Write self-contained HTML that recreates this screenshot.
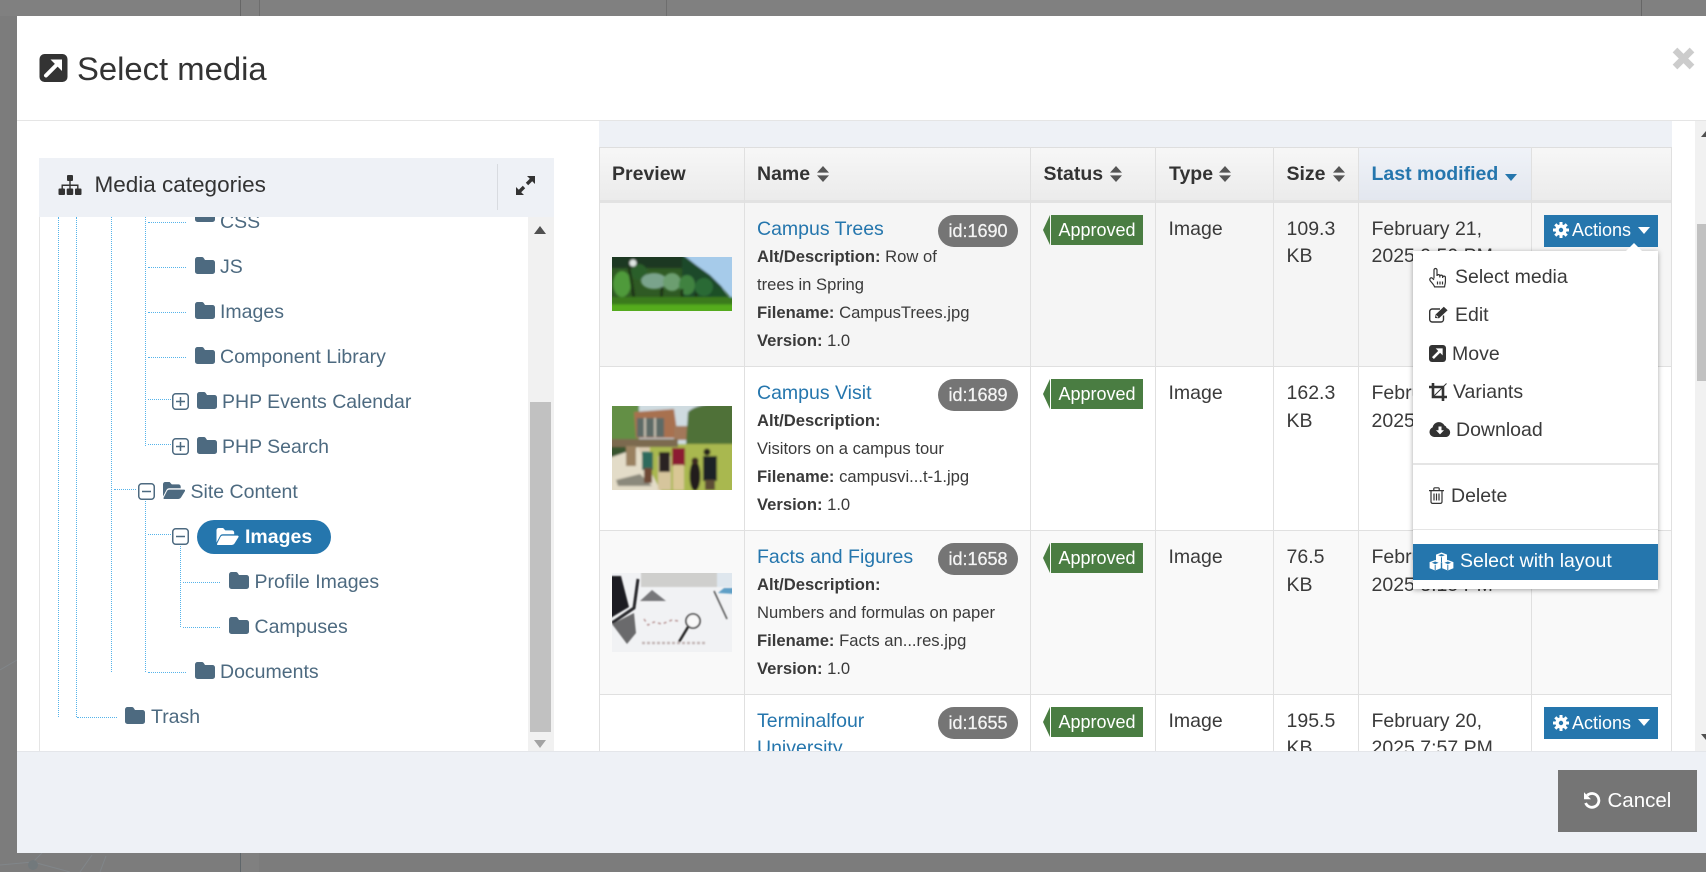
<!DOCTYPE html>
<html lang="en">
<head>
<meta charset="utf-8">
<title>Select media</title>
<style>
html,body{margin:0;padding:0;width:1706px;height:872px;overflow:hidden;background:#7c7c7c;font-family:"Liberation Sans",sans-serif;color:#3a3a3a}
.a{position:absolute}
.t{position:absolute;white-space:nowrap;line-height:28px;margin-top:-14px;font-size:19.5px}
.d{margin-top:-13px}
.s{font-size:16.6px}
b{font-weight:700}
.tree{color:#4d6a80}
.lnk{color:#2576ad}
.v{position:absolute;width:0;border-left:1px dotted #55b3ea}
.h{position:absolute;height:0;border-top:1px dotted #55b3ea}
.pill{position:absolute;left:938px;width:80px;height:32px;border-radius:16px;background:#757575;color:#f4f4f4;font-size:18px;-webkit-text-stroke:.25px #f4f4f4;line-height:32px;text-align:center}
.appr{position:absolute;left:1051px;width:92px;height:30px;background:#4a7d42;color:#fff;font-size:18px;line-height:30px;text-align:center}
.arr{position:absolute;left:1043px;width:0;height:0;border-style:solid;border-width:15px 7px 15px 0;border-color:transparent #4a7d42 transparent transparent}
.btn{position:absolute;left:1544px;width:114px;height:32px;background:#2576ad}
.col{position:absolute;width:1px;background:#e0e0e0}
svg{position:absolute;display:block}
</style>
</head>
<body>
<!-- page behind -->
<div class="a" style="left:0;top:0;width:1706px;height:16px;background:#808080"></div>
<div class="a" style="left:240px;top:0;width:1px;height:16px;background:#666"></div>
<div class="a" style="left:259px;top:0;width:1px;height:16px;background:#6e6e6e"></div>
<div class="a" style="left:666px;top:0;width:1px;height:16px;background:#6e6e6e"></div>
<div class="a" style="left:1641px;top:0;width:1px;height:16px;background:#666"></div>
<div class="a" style="left:240px;top:853px;width:1px;height:19px;background:#5f666a"></div>
<div class="a" style="left:241px;top:853px;width:18px;height:19px;background:#808080"></div>
<svg style="left:0;top:640px" width="240" height="232" viewBox="0 0 240 232" fill="none" stroke="#81868a" stroke-width="1"><path d="M0 30L17 20M0 225L33 222L70 232M33 222L42 213M80 232L92 215M100 232L106 216"/><circle cx="33" cy="225" r="5" fill="#72797c" stroke="none"/></svg>
<!-- modal -->
<div class="a" style="left:17px;top:16px;width:1689px;height:837px;background:#fff"></div>
<div class="a" style="left:17px;top:120px;width:1689px;height:1px;background:#e5e5e5"></div>

<svg style="left:39px;top:54px" width="29" height="28" viewBox="0 0 28 28"><rect width="28" height="28" rx="5" fill="#333"/><path d="M6.5 21.5L18 10" stroke="#fff" stroke-width="4" stroke-linecap="round"/><path d="M11 5.5H22.5V17z" fill="#fff"/></svg>
<span class="t" style="left:77px;top:69px;font-size:32.8px;line-height:40px;margin-top:-20px;color:#333">Select media</span>
<svg style="left:1672px;top:47px" width="23" height="23" viewBox="0 0 23 23"><path d="M3 3L20 20M20 3L3 20" stroke="#ccc" stroke-width="6.6"/></svg>

<!-- page scrollbar -->
<div class="a" style="left:1695px;top:121px;width:11px;height:630px;background:#f1f1f1"></div>
<div class="a" style="left:1697px;top:224px;width:9px;height:157px;background:#c1c1c1"></div>
<svg style="left:1701px;top:131px" width="5" height="6"><path d="M0 6L5 0V6z" fill="#505050"/></svg>
<svg style="left:1701px;top:734px" width="5" height="6"><path d="M0 0H5V6z" fill="#505050"/></svg>

<!-- tree panel -->
<div class="a" style="left:39px;top:217px;width:1px;height:534px;background:#e5e5e5"></div>
<div class="a" style="left:40px;top:217px;width:488px;height:534px;background:#fff;overflow:hidden"></div>
<div class="a" style="left:528px;top:217px;width:26px;height:534px;background:#f1f1f1"></div>
<div class="a" style="left:530px;top:402px;width:21px;height:330px;background:#c1c1c1"></div>
<svg style="left:534px;top:226px" width="12" height="8"><path d="M0 8L6 0L12 8z" fill="#505050"/></svg>
<svg style="left:534px;top:740px" width="12" height="8"><path d="M0 0L6 8L12 0z" fill="#a3a3a3"/></svg>

<!-- dotted lines -->
<div class="v" style="left:58px;top:217px;height:500px"></div>
<div class="v" style="left:76px;top:217px;height:500px"></div>
<div class="h" style="left:77px;top:717px;width:40px"></div>
<div class="v" style="left:111px;top:217px;height:455px"></div>
<div class="h" style="left:114px;top:489px;width:22px"></div>
<div class="v" style="left:145px;top:217px;height:229px"></div>
<div class="h" style="left:148px;top:222px;width:38px"></div>
<div class="h" style="left:148px;top:267px;width:38px"></div>
<div class="h" style="left:148px;top:312px;width:38px"></div>
<div class="h" style="left:148px;top:357px;width:38px"></div>
<div class="h" style="left:148px;top:399px;width:23px"></div>
<div class="h" style="left:148px;top:444px;width:23px"></div>
<div class="v" style="left:145px;top:499px;height:173px"></div>
<div class="h" style="left:148px;top:534px;width:23px"></div>
<div class="h" style="left:148px;top:672px;width:38px"></div>
<div class="v" style="left:180px;top:544px;height:83px"></div>
<div class="h" style="left:183px;top:582px;width:37px"></div>
<div class="h" style="left:183px;top:627px;width:37px"></div>

<!-- tree rows -->
<svg width="0" height="0" style="position:absolute"><defs>
<path id="fld" d="M2.5 0H7a2 2 0 0 1 1.7 1L10 3H17.5A2.5 2.5 0 0 1 20 5.5V14.5A2.5 2.5 0 0 1 17.5 17H2.5A2.5 2.5 0 0 1 0 14.5V2.5A2.5 2.5 0 0 1 2.5 0z"/>
<path id="fop" d="M0 14.5V2.2A2.2 2.2 0 0 1 2.2 0H6.6L8.8 2.4H15.5A2.2 2.2 0 0 1 17.7 4.6V6.3H6.2A3 3 0 0 0 3.6 7.8zM6 7.6H21A1 1 0 0 1 22 9L18 15.5A3.2 3.2 0 0 1 15.4 17H1.2A.8.8 0 0 1 .6 15.8L4 9A2.4 2.4 0 0 1 6 7.6z"/>
</defs></svg>

<svg style="left:195px;top:205px" width="20" height="17" viewBox="0 0 20 17" fill="#4d6a80"><use href="#fld"/></svg>
<svg style="left:195px;top:257px" width="20" height="17" viewBox="0 0 20 17" fill="#4d6a80"><use href="#fld"/></svg>
<svg style="left:195px;top:302px" width="20" height="17" viewBox="0 0 20 17" fill="#4d6a80"><use href="#fld"/></svg>
<svg style="left:195px;top:347px" width="20" height="17" viewBox="0 0 20 17" fill="#4d6a80"><use href="#fld"/></svg>
<svg style="left:197px;top:392px" width="20" height="17" viewBox="0 0 20 17" fill="#4d6a80"><use href="#fld"/></svg>
<svg style="left:197px;top:437px" width="20" height="17" viewBox="0 0 20 17" fill="#4d6a80"><use href="#fld"/></svg>
<svg style="left:163px;top:482px" width="22" height="17" viewBox="0 0 22 17" fill="#4d6a80"><use href="#fop"/></svg>
<svg style="left:229px;top:572px" width="20" height="17" viewBox="0 0 20 17" fill="#4d6a80"><use href="#fld"/></svg>
<svg style="left:229px;top:617px" width="20" height="17" viewBox="0 0 20 17" fill="#4d6a80"><use href="#fld"/></svg>
<svg style="left:195px;top:662px" width="20" height="17" viewBox="0 0 20 17" fill="#4d6a80"><use href="#fld"/></svg>
<svg style="left:125px;top:707px" width="20" height="17" viewBox="0 0 20 17" fill="#4d6a80"><use href="#fld"/></svg>

<!-- +/- boxes -->
<svg style="left:172px;top:393px" width="17" height="17" viewBox="0 0 17 17" fill="none" stroke="#4d6a80" stroke-width="1.5"><rect x=".75" y=".75" width="15.5" height="15.5" rx="3" fill="#fff"/><path d="M4 8.5H13M8.5 4V13"/></svg>
<svg style="left:172px;top:438px" width="17" height="17" viewBox="0 0 17 17" fill="none" stroke="#4d6a80" stroke-width="1.5"><rect x=".75" y=".75" width="15.5" height="15.5" rx="3" fill="#fff"/><path d="M4 8.5H13M8.5 4V13"/></svg>
<svg style="left:138px;top:483px" width="17" height="17" viewBox="0 0 17 17" fill="none" stroke="#4d6a80" stroke-width="1.5"><rect x=".75" y=".75" width="15.5" height="15.5" rx="3" fill="#fff"/><path d="M4 8.5H13"/></svg>
<svg style="left:172px;top:528px" width="17" height="17" viewBox="0 0 17 17" fill="none" stroke="#4d6a80" stroke-width="1.5"><rect x=".75" y=".75" width="15.5" height="15.5" rx="3" fill="#fff"/><path d="M4 8.5H13"/></svg>

<span class="t tree" style="left:220px;top:222px">CSS</span>
<span class="t tree" style="left:220px;top:267px">JS</span>
<span class="t tree" style="left:220px;top:312px">Images</span>
<span class="t tree" style="left:220px;top:357px">Component Library</span>
<span class="t tree" style="left:222px;top:402px">PHP Events Calendar</span>
<span class="t tree" style="left:222px;top:447px">PHP Search</span>
<span class="t tree" style="left:190.5px;top:492px">Site Content</span>
<div class="a" style="left:197px;top:520px;width:134px;height:34px;border-radius:17px;background:#2576ad"></div>
<svg style="left:216px;top:528px" width="23" height="17" viewBox="0 0 22 17" fill="#fff"><use href="#fop"/></svg>
<span class="t" style="left:245px;top:537px;font-weight:700;color:#fff">Images</span>
<span class="t tree" style="left:254.5px;top:582px">Profile Images</span>
<span class="t tree" style="left:254.5px;top:627px">Campuses</span>
<span class="t tree" style="left:220px;top:672px">Documents</span>
<span class="t tree" style="left:151px;top:717px">Trash</span>

<!-- tree header -->
<div class="a" style="left:39px;top:158px;width:515px;height:59px;background:#eef1f6"></div>
<svg style="left:58px;top:175px" width="24" height="20" viewBox="0 0 23 20" fill="#333"><rect x="8.5" y="0" width="6" height="6" rx="1"/><path d="M10.8 5h1.4v4.5H20V14h-1.4V11H12.2V14H10.8V11H4.4V14H3V9.5H10.8z"/><rect x="0" y="13.5" width="6.5" height="6.5" rx="1"/><rect x="8.2" y="13.5" width="6.5" height="6.5" rx="1"/><rect x="16.5" y="13.5" width="6.5" height="6.5" rx="1"/></svg>
<span class="t" style="left:94.5px;top:185px;font-size:22.5px;color:#333">Media categories</span>
<div class="a" style="left:497px;top:164px;width:1px;height:46px;background:#d8dbe0"></div>
<svg style="left:516px;top:176px" width="19" height="19" viewBox="0 0 19 19" fill="#333"><path d="M11 0H19V8L16.2 5.2L12.2 9.2L9.8 6.8L13.8 2.8zM8 19H0V11L2.8 13.8L6.8 9.8L9.2 12.2L5.2 16.2z"/></svg>

<!-- table area -->
<div class="a" style="left:599px;top:121px;width:1073px;height:26px;background:#eef1f6"></div>
<div class="a" style="left:599px;top:147px;width:1073px;height:604px;overflow:hidden;background:#fff">
  <div class="a" style="left:0;top:0;width:1073px;height:53px;background:linear-gradient(#f7f7f7,#ebebeb)"></div>
  <div class="a" style="left:760px;top:0;width:172px;height:53px;background:linear-gradient(#f0f3f8,#e3e7ef)"></div>
  <div class="a" style="left:0;top:0;width:1073px;height:1px;background:#dedede"></div>
  <div class="a" style="left:0;top:53px;width:1073px;height:3px;background:#e2e2e2"></div>
  <div class="a" style="left:0;top:56px;width:1073px;height:163px;background:#f5f5f5"></div>
  <div class="a" style="left:0;top:219px;width:1073px;height:1px;background:#e0e0e0"></div>
  <div class="a" style="left:0;top:383px;width:1073px;height:1px;background:#e0e0e0"></div>
  <div class="a" style="left:0;top:384px;width:1073px;height:163px;background:#f9f9f9"></div>
  <div class="a" style="left:0;top:547px;width:1073px;height:1px;background:#e0e0e0"></div>
  <div class="col" style="left:0;top:0;height:604px"></div>
  <div class="col" style="left:145px;top:0;height:604px"></div>
  <div class="col" style="left:431px;top:0;height:604px"></div>
  <div class="col" style="left:556px;top:0;height:604px"></div>
  <div class="col" style="left:674px;top:0;height:604px"></div>
  <div class="col" style="left:759px;top:0;height:604px"></div>
  <div class="col" style="left:932px;top:0;height:604px"></div>
  <div class="col" style="left:1072px;top:0;height:604px"></div>
</div>

<!-- header labels -->
<span class="t d" style="left:612px;top:173px;font-weight:700;color:#333">Preview</span>
<span class="t d" style="left:757px;top:173px;font-weight:700;color:#333">Name</span>
<svg style="left:817px;top:166px" width="12" height="16" viewBox="0 0 12 16" fill="#555"><path d="M0 6.6L6 0L12 6.6zM0 9.4L6 16L12 9.4z"/></svg>
<span class="t d" style="left:1043.5px;top:173px;font-weight:700;color:#333">Status</span>
<svg style="left:1110px;top:166px" width="12" height="16" viewBox="0 0 12 16" fill="#555"><path d="M0 6.6L6 0L12 6.6zM0 9.4L6 16L12 9.4z"/></svg>
<span class="t d" style="left:1169px;top:173px;font-weight:700;color:#333">Type</span>
<svg style="left:1219px;top:166px" width="12" height="16" viewBox="0 0 12 16" fill="#555"><path d="M0 6.6L6 0L12 6.6zM0 9.4L6 16L12 9.4z"/></svg>
<span class="t d" style="left:1286.5px;top:173px;font-weight:700;color:#333">Size</span>
<svg style="left:1333px;top:166px" width="12" height="16" viewBox="0 0 12 16" fill="#555"><path d="M0 6.6L6 0L12 6.6zM0 9.4L6 16L12 9.4z"/></svg>
<span class="t d lnk" style="left:1371.5px;top:173px;font-weight:700">Last modified</span>
<svg style="left:1505px;top:174px" width="12" height="7" viewBox="0 0 12 7" fill="#2576ad"><path d="M0 0H12L6 7z"/></svg>

<!-- thumbnails -->
<svg style="left:612px;top:257px" width="120" height="54" viewBox="0 0 120 54">
<defs><filter id="b1" x="-5%" y="-5%" width="110%" height="110%"><feGaussianBlur stdDeviation="1.1"/></filter><clipPath id="c1"><rect width="120" height="54"/></clipPath></defs>
<g clip-path="url(#c1)"><rect width="120" height="54" fill="#2f5a24"/>
<g filter="url(#b1)">
<path d="M68 -3H123V42L118 40L108 28L96 18L82 8z" fill="#a6cbea"/>
<rect x="-3" y="-3" width="74" height="14" fill="#1d3722"/>
<path d="M70 -3L84 8L98 18L110 30L116 42H70z" fill="#1f4a2c"/>
<ellipse cx="10" cy="27" rx="9" ry="13" fill="#4f9a3a"/>
<ellipse cx="27" cy="15" rx="8" ry="8" fill="#2c5f2a"/>
<ellipse cx="42" cy="24" rx="13" ry="8" fill="#7aa38c"/>
<ellipse cx="60" cy="25" rx="9" ry="9" fill="#6c9e70"/>
<ellipse cx="75" cy="28" rx="8" ry="10" fill="#3f8240"/>
<ellipse cx="92" cy="30" rx="9" ry="9" fill="#2c6a36"/>
<ellipse cx="106" cy="37" rx="7" ry="6" fill="#1f5028"/>
<path d="M17 10L23 48M50 30L49 46M70 32L70 46M84 36L84 46" stroke="#1f3318" stroke-width="2.6"/>
<rect x="-3" y="40" width="126" height="8" fill="#3a7a1e"/>
<rect x="-3" y="47.5" width="126" height="8" fill="#55ac1c"/>
<circle cx="21" cy="6" r="3.5" fill="#dfe6e2"/>
</g></g></svg>

<svg style="left:612px;top:406px" width="120" height="84" viewBox="0 0 120 84">
<defs><filter id="b2" x="-5%" y="-5%" width="110%" height="110%"><feGaussianBlur stdDeviation="1.1"/></filter><clipPath id="c2"><rect width="120" height="84"/></clipPath></defs>
<g clip-path="url(#c2)"><rect width="120" height="84" fill="#d8c9b0"/>
<g filter="url(#b2)">
<rect x="-3" y="-3" width="126" height="42" fill="#cfdbe0"/>
<rect x="-3" y="-3" width="30" height="36" fill="#648f44"/>
<path d="M22 6L62 3L66 32H24z" fill="#a8714f"/>
<rect x="25" y="12" width="27" height="19" fill="#5d6b66"/>
<path d="M33 12V31M43 12V31" stroke="#c9c2b2" stroke-width="2"/>
<path d="M62 20H76V34H62z" fill="#a2785a"/>
<path d="M76 6Q86 -4 123 -3V38H74z" fill="#4f7139"/>
<path d="M38 38H123V87H38z" fill="#a9b84f"/>
<path d="M-3 33H66V41H-3z" fill="#7c6a50"/>
<path d="M-3 41H14V56H-3z" fill="#37552e"/>
<path d="M-3 52L26 42L50 87H-3z" fill="#e3dcc8"/>
<path d="M4 74L28 68L40 80H6z" fill="#8b897c"/>
<rect x="14" y="40" width="10" height="20" fill="#9a8160"/>
<rect x="30" y="46" width="11" height="18" fill="#2e6a5c"/>
<rect x="32" y="62" width="8" height="15" fill="#6e4a36"/>
<rect x="46" y="50" width="13" height="34" fill="#d6c59c"/>
<rect x="47" y="46" width="11" height="20" fill="#2a2420"/>
<rect x="60" y="42" width="13" height="18" fill="#8c1f33"/>
<rect x="61" y="59" width="11" height="25" fill="#d9c795"/>
<ellipse cx="83" cy="70" rx="5.5" ry="15" fill="#201a1a"/>
<circle cx="83" cy="55" r="3.5" fill="#3d2a22"/>
<rect x="91" y="50" width="14" height="25" fill="#1c2026"/>
<rect x="93" y="74" width="10" height="10" fill="#5d4e36"/>
<circle cx="95" cy="46" r="3.5" fill="#25201c"/>
</g></g></svg>

<svg style="left:612px;top:573px" width="120" height="79" viewBox="0 0 120 79">
<defs><filter id="b3" x="-5%" y="-5%" width="110%" height="110%"><feGaussianBlur stdDeviation=".9"/></filter><clipPath id="c3"><rect width="120" height="79"/></clipPath></defs>
<g clip-path="url(#c3)"><rect width="120" height="79" fill="#f1f2f4"/>
<g filter="url(#b3)">
<rect x="29" y="-3" width="76" height="17" fill="#cfcfcd"/>
<rect x="105" y="-3" width="18" height="17" fill="#dfe7ee"/>
<path d="M-3 3H9L17 34L-3 46z" fill="#1e1e20"/>
<path d="M0 50L22 35L26 6" stroke="#26262a" stroke-width="3" fill="none"/>
<path d="M40 17L54 28H28z" fill="#77777a"/>
<path d="M0 51L22 40L24 60L15 71z" fill="#6a6a6c"/>
<path d="M112 15H123V21L106 20z" fill="#5e9fc6"/>
<path d="M102 18L115 46" stroke="#555" stroke-width="1.5" fill="none"/>
<circle cx="81" cy="48" r="7" fill="#f8f8f8" stroke="#333" stroke-width="1.6"/>
<path d="M76 54L67 69" stroke="#1d1d1d" stroke-width="2.4"/>
<path d="M30 70H95" stroke="#c4b8b8" stroke-width="2.5" stroke-dasharray="3 2"/>
<path d="M32 46l4 6 6-3 8 2 10-4 6 1" stroke="#b99" stroke-width="1.5" fill="none" stroke-dasharray="3 3"/>
</g></g></svg>

<!-- row 1 -->
<span class="t d lnk" style="left:757px;top:228px">Campus Trees</span>
<div class="pill" style="top:215px">id:1690</div>
<span class="t s" style="left:757px;top:257px"><b>Alt/Description:</b> Row of</span>
<span class="t s" style="left:757px;top:285px">trees in Spring</span>
<span class="t s" style="left:757px;top:313px"><b>Filename:</b> CampusTrees.jpg</span>
<span class="t s" style="left:757px;top:341px"><b>Version:</b> 1.0</span>
<div class="arr" style="top:215px"></div><div class="appr" style="top:215px">Approved</div>
<span class="t d" style="left:1168.5px;top:228px">Image</span>
<span class="t d" style="left:1286.5px;top:228px">109.3</span>
<span class="t d" style="left:1286.5px;top:255px">KB</span>
<span class="t d" style="left:1371.5px;top:228px">February 21,</span>
<span class="t d" style="left:1371.5px;top:255px">2025 9:50 PM</span>

<!-- row 2 -->
<span class="t d lnk" style="left:757px;top:392px">Campus Visit</span>
<div class="pill" style="top:379px">id:1689</div>
<span class="t s" style="left:757px;top:421px"><b>Alt/Description:</b></span>
<span class="t s" style="left:757px;top:449px">Visitors on a campus tour</span>
<span class="t s" style="left:757px;top:477px"><b>Filename:</b> campusvi...t-1.jpg</span>
<span class="t s" style="left:757px;top:505px"><b>Version:</b> 1.0</span>
<div class="arr" style="top:379px"></div><div class="appr" style="top:379px">Approved</div>
<span class="t d" style="left:1168.5px;top:392px">Image</span>
<span class="t d" style="left:1286.5px;top:392px">162.3</span>
<span class="t d" style="left:1286.5px;top:420px">KB</span>
<span class="t d" style="left:1371.5px;top:392px">February 21,</span>
<span class="t d" style="left:1371.5px;top:420px">2025 8:10 PM</span>

<!-- row 3 -->
<span class="t d lnk" style="left:757px;top:556px">Facts and Figures</span>
<div class="pill" style="top:543px">id:1658</div>
<span class="t s" style="left:757px;top:585px"><b>Alt/Description:</b></span>
<span class="t s" style="left:757px;top:613px">Numbers and formulas on paper</span>
<span class="t s" style="left:757px;top:641px"><b>Filename:</b> Facts an...res.jpg</span>
<span class="t s" style="left:757px;top:669px"><b>Version:</b> 1.0</span>
<div class="arr" style="top:543px"></div><div class="appr" style="top:543px">Approved</div>
<span class="t d" style="left:1168.5px;top:556px">Image</span>
<span class="t d" style="left:1286.5px;top:556px">76.5</span>
<span class="t d" style="left:1286.5px;top:584px">KB</span>
<span class="t d" style="left:1371.5px;top:556px">February 21,</span>
<span class="t d" style="left:1371.5px;top:584px">2025 3:15 PM</span>

<!-- row 4 -->
<span class="t d lnk" style="left:757px;top:720px">Terminalfour</span>
<span class="t d lnk" style="left:757px;top:747px">University</span>
<div class="pill" style="top:707px">id:1655</div>
<div class="arr" style="top:707px"></div><div class="appr" style="top:707px">Approved</div>
<span class="t d" style="left:1168.5px;top:720px">Image</span>
<span class="t d" style="left:1286.5px;top:720px">195.5</span>
<span class="t d" style="left:1286.5px;top:747px">KB</span>
<span class="t d" style="left:1371.5px;top:720px">February 20,</span>
<span class="t d" style="left:1371.5px;top:747px">2025 7:57 PM</span>

<!-- Actions buttons -->
<svg width="0" height="0" style="position:absolute"><defs>
<g id="gear"><path d="M8 0V16M0 8H16M2.3 2.3L13.7 13.7M13.7 2.3L2.3 13.7" stroke="#fff" stroke-width="3"/><circle cx="8" cy="8" r="5.6" fill="#fff"/><circle cx="8" cy="8" r="2.2" fill="#2576ad"/></g>
</defs></svg>
<div class="btn" style="top:215px"></div>
<svg style="left:1552.5px;top:222px" width="16" height="16" viewBox="0 0 16 16"><use href="#gear"/></svg>
<span class="t" style="left:1572px;top:230px;font-size:18px;color:#fff">Actions</span>
<svg style="left:1638px;top:227px" width="12" height="7" viewBox="0 0 12 7"><path d="M0 0H12L6 7z" fill="#fff"/></svg>

<div class="btn" style="top:707px"></div>
<svg style="left:1552.5px;top:715px" width="16" height="16" viewBox="0 0 16 16"><use href="#gear"/></svg>
<span class="t" style="left:1572px;top:723px;font-size:18px;color:#fff">Actions</span>
<svg style="left:1638px;top:719px" width="12" height="7" viewBox="0 0 12 7"><path d="M0 0H12L6 7z" fill="#fff"/></svg>

<!-- footer -->
<div class="a" style="left:17px;top:751px;width:1689px;height:102px;background:#eef1f6;border-top:1px solid #e4e6ea;box-sizing:border-box"></div>
<div class="a" style="left:1558px;top:770px;width:139px;height:62px;background:#757575"></div>
<svg style="left:1583px;top:791px" width="18" height="18" viewBox="0 0 18 18" fill="none"><path d="M4.2 4.4A6.9 6.9 0 1 1 2.6 12" stroke="#fff" stroke-width="2.8"/><path d="M1 1.2V8.2H8z" fill="#fff"/></svg>
<span class="t" style="left:1607.5px;top:801px;font-size:20.5px;color:#fff">Cancel</span>

<!-- dropdown -->
<div class="a" style="left:1413px;top:251px;width:245px;height:338px;background:#fff;box-shadow:0 1px 5px rgba(0,0,0,.35)"></div>
<svg style="left:1625px;top:243px" width="18" height="9" viewBox="0 0 18 9"><path d="M0 9L9 0L18 9z" fill="#fff"/></svg>
<svg style="left:1428px;top:267px" width="20" height="21" viewBox="0 0 20 20" fill="none" stroke="#333" stroke-width="1.2" stroke-linejoin="round"><path d="M6 11V2.5a1.5 1.5 0 0 1 3 0V8.5M9 8.5a1.4 1.4 0 0 1 2.8 0V10M11.8 9a1.4 1.4 0 0 1 2.8 0V10.5M14.6 10a1.4 1.4 0 0 1 2.8 0V14.5C17.4 16.5 16.6 17.4 16.6 19.4H6.6C6 17.4 4.5 16 2.2 13.2C1 11.4 2.6 9.6 4.2 10.6L6 12.3M9.5 14V17M12 14V17M14.5 14V17"/></svg>
<span class="t" style="left:1455px;top:277px">Select media</span>
<svg style="left:1429px;top:306px" width="20" height="17" viewBox="0 0 20 17" fill="none" stroke="#333" stroke-width="1.4"><path d="M14.5 9.5V13.5A2.5 2.5 0 0 1 12 16H3.2A2.5 2.5 0 0 1 .7 13.5V5.5A2.5 2.5 0 0 1 3.2 3H11"/><path d="M6 12L6.6 8.5L14.8 .8L18.6 4.2L10 12.2z" fill="#333" stroke="none"/><path d="M7.2 9.6L9 11.4" stroke="#fff" stroke-width="1"/></svg>
<span class="t" style="left:1455px;top:315px">Edit</span>
<svg style="left:1429px;top:345px" width="17" height="17" viewBox="0 0 28 28"><rect width="28" height="28" rx="5" fill="#333"/><path d="M6.5 21.5L18 10" stroke="#fff" stroke-width="4.4"/><path d="M11 5.5H22.5V17z" fill="#fff"/></svg>
<span class="t" style="left:1452px;top:354px">Move</span>
<svg style="left:1429px;top:383px" width="18" height="18" viewBox="0 0 18 18" fill="none" stroke="#333"><path d="M4 0V14H18" stroke-width="2.6"/><path d="M0 4H14V18" stroke-width="2.6"/><path d="M4 14L17.5 .5" stroke-width="1"/></svg>
<span class="t" style="left:1453px;top:392px">Variants</span>
<svg style="left:1429px;top:422px" width="22" height="15" viewBox="0 0 22 15"><path d="M5 15A5 5 0 0 1 3.6 5.4A6.4 6.4 0 0 1 15.6 3.6A3 3 0 0 1 17.6 6A4.6 4.6 0 0 1 17.4 15z" fill="#333"/><path d="M9.5 4.5H12.5V8.2H15L11 12.4L7 8.2H9.5z" fill="#fff"/></svg>
<span class="t" style="left:1456px;top:430px">Download</span>
<div class="a" style="left:1413px;top:463px;width:245px;height:2px;background:#e5e5e5"></div>
<svg style="left:1429px;top:487px" width="15" height="17" viewBox="0 0 15 17" fill="none" stroke="#333" stroke-width="1.2"><path d="M0 3.6H15M2 3.6V14.8A1.6 1.6 0 0 0 3.6 16.4H11.4A1.6 1.6 0 0 0 13 14.8V3.6M4.8 3.6V1.8A1 1 0 0 1 5.8 .8H9.2A1 1 0 0 1 10.2 1.8V3.6M5 6.5V13.5M7.5 6.5V13.5M10 6.5V13.5"/></svg>
<span class="t" style="left:1451px;top:496px">Delete</span>
<div class="a" style="left:1413px;top:529px;width:245px;height:1px;background:#e5e5e5"></div>
<div class="a" style="left:1413px;top:544px;width:245px;height:36px;background:#2576ad"></div>
<svg style="left:1429px;top:552px" width="25" height="19" viewBox="0 0 25 19" stroke-linejoin="round">
<path d="M12.5 .5L18 2.6V8.6L12.5 10.7L7 8.6V2.6z" fill="#fff"/><path d="M12.5 2L15.8 3.2L12.5 4.5L9.2 3.2z" fill="#2576ad"/><path d="M12.5 5.2V10.4" stroke="#2576ad" stroke-width="1"/>
<path d="M6.2 8L11.8 10.1V16.3L6.2 18.5L.6 16.3V10.1z" fill="#fff"/><path d="M6.2 9.5L9.6 10.8L6.2 12.1L2.8 10.8z" fill="#2576ad"/><path d="M6.2 12.8V18.2" stroke="#2576ad" stroke-width="1"/>
<path d="M18.8 8L24.4 10.1V16.3L18.8 18.5L13.2 16.3V10.1z" fill="#fff"/><path d="M18.8 9.5L22.2 10.8L18.8 12.1L15.4 10.8z" fill="#2576ad"/><path d="M18.8 12.8V18.2" stroke="#2576ad" stroke-width="1"/>
</svg>
<span class="t" style="left:1460px;top:561px;color:#fff">Select with layout</span>
</body>
</html>
